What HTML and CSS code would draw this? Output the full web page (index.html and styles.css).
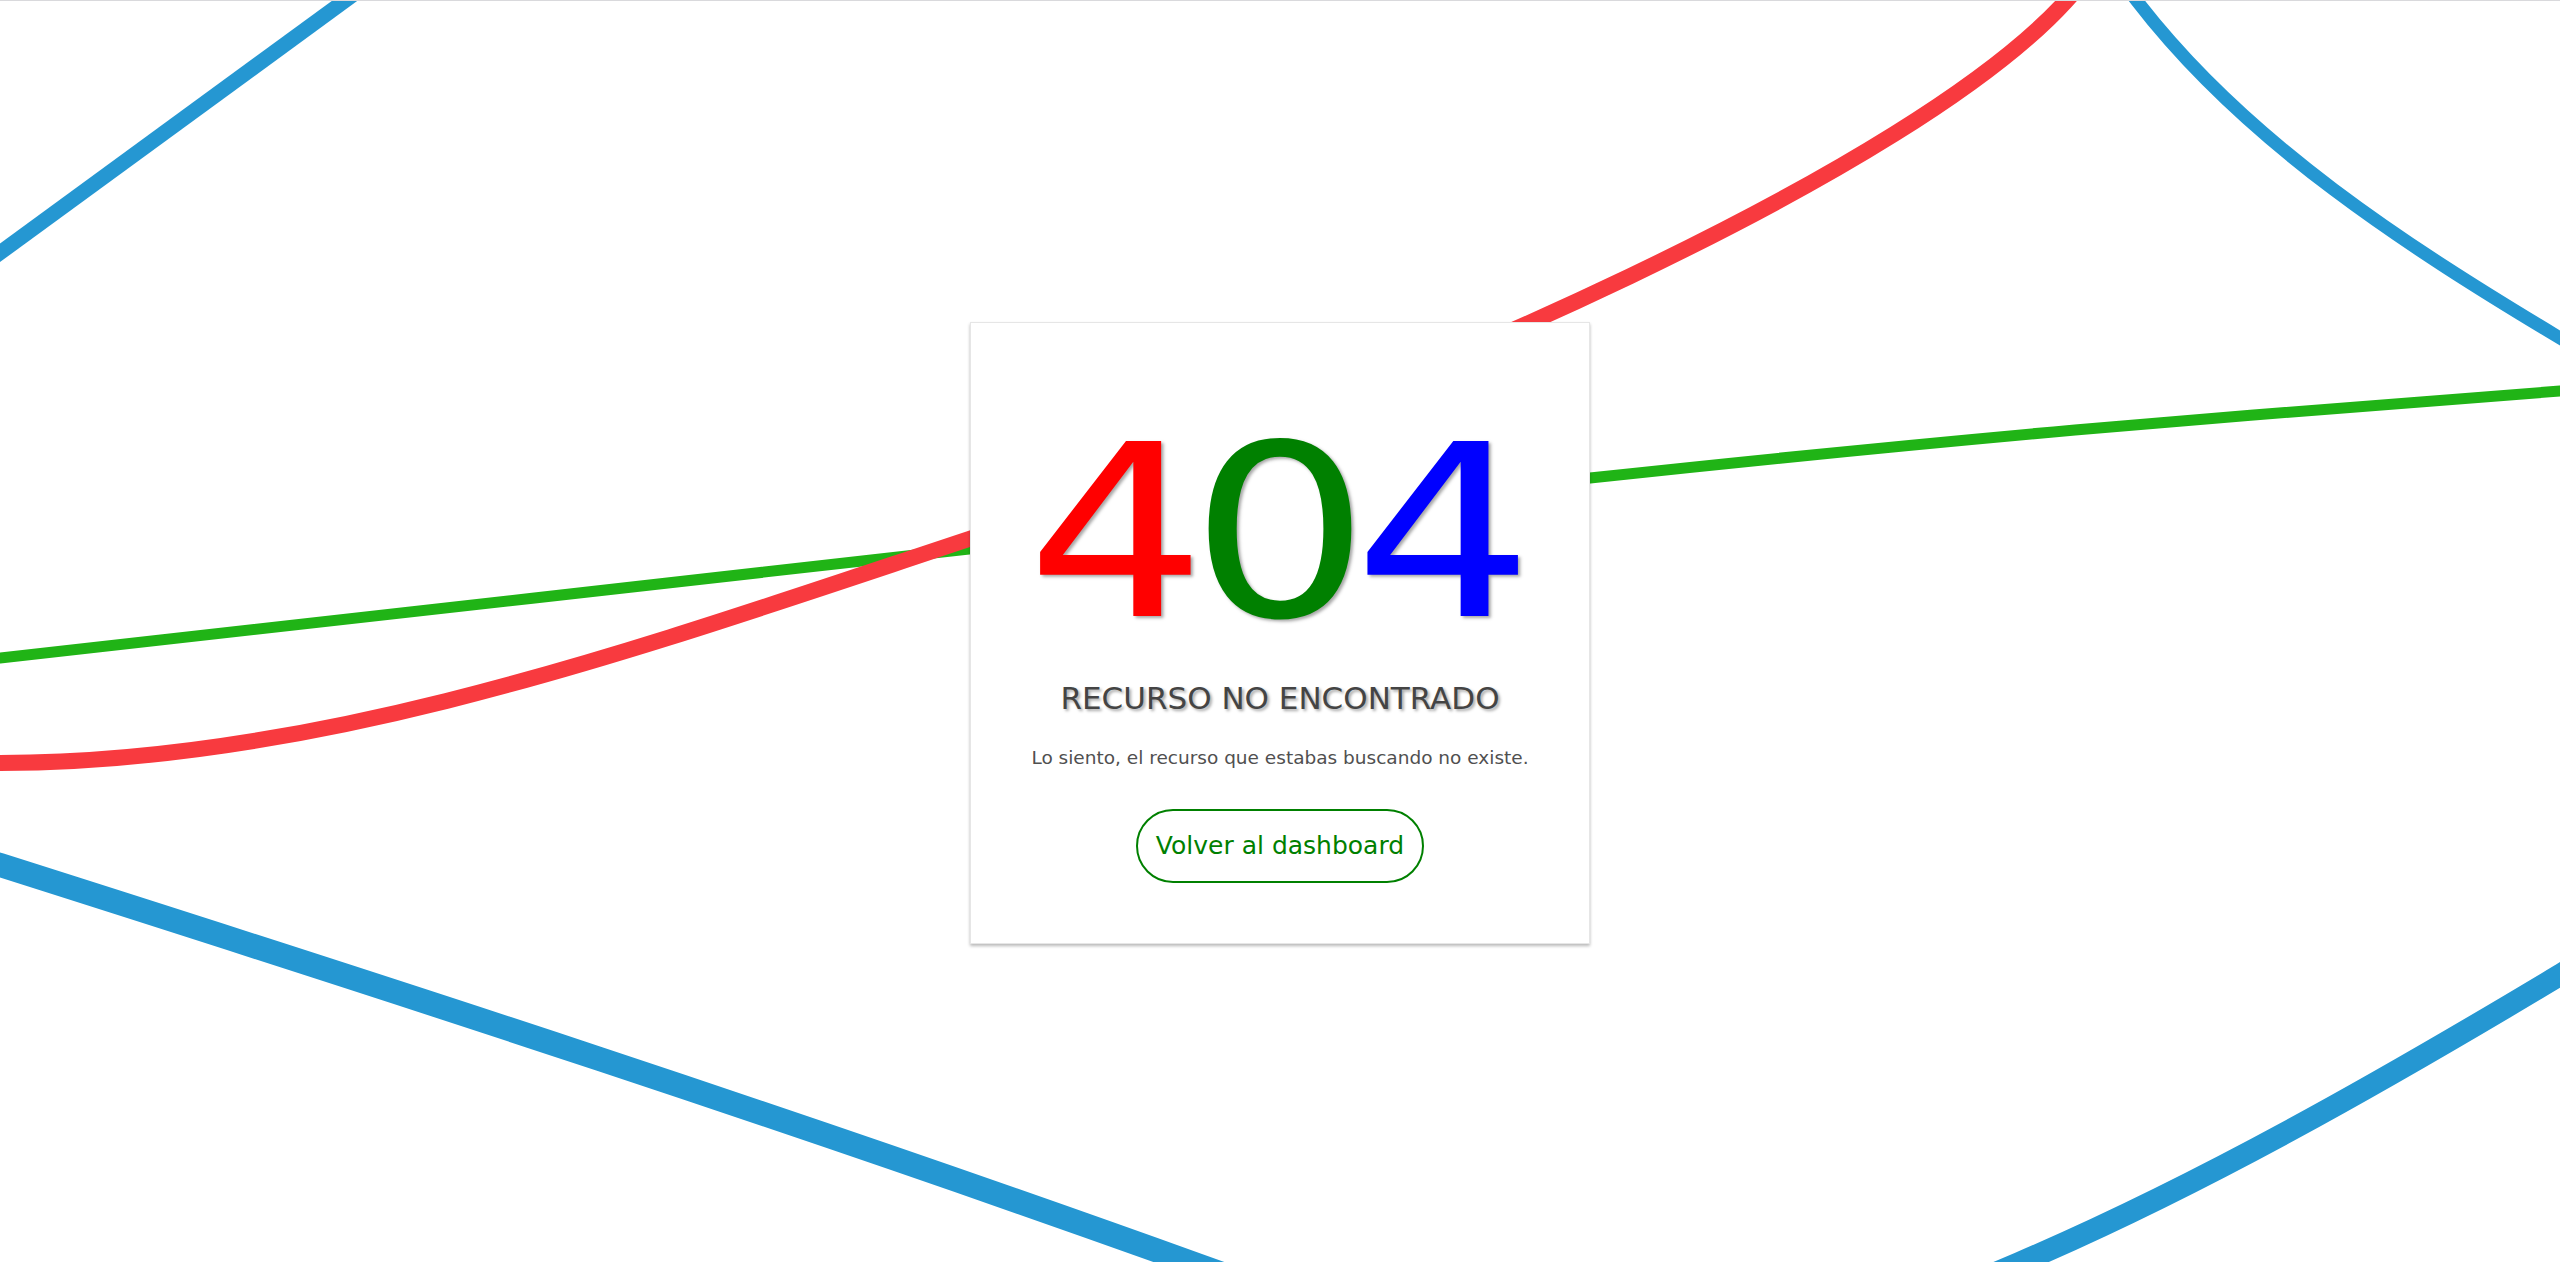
FILE: index.html
```html
<!DOCTYPE html>
<html lang="es">
<head>
<meta charset="utf-8">
<title>404 - Recurso no encontrado</title>
<link rel="stylesheet" href="styles.css">
</head>
<body>
<div class="page">
  <svg class="bg" width="2560" height="1262" viewBox="0 0 2560 1262" aria-hidden="true">
    <path class="ln blue w15" d="M -40 281 L 380 -26"/>
    <path class="ln blue w13" d="M 2110 -35 L 2137 0 C 2247 143 2410 247 2560 337 L 2660 397"/>
    <path class="ln green w11" d="M -100 668 L 0 657 C 178.2 637 704 578 969 548 C 1234 518 1405.7 496.8 1590 477 C 1774.3 457.2 1913.3 443.5 2075 429 C 2236.7 414.5 2462.5 397.7 2560 390 L 2660 383"/>
    <path class="ln red w16" d="M -100 762 L 0 762 C 323 762 646 645 969 538 C 1419 389.5 1916 165 2066 0 L 2120 -59"/>
    <path class="ln blue w24" d="M -100 832 L 0 864 C 400 991 800 1121 1200 1265 L 1300 1301"/>
    <path class="ln blue w22" d="M 1900 1313 L 2019 1262 C 2199 1185 2380 1082 2560 974 L 2660 910"/>
  </svg>
  <main class="card">
    <h1 class="code"><span class="d-red">4</span><span class="d-green">0</span><span class="d-blue">4</span></h1>
    <h2 class="title">RECURSO NO ENCONTRADO</h2>
    <p class="msg">Lo siento, el recurso que estabas buscando no existe.</p>
    <a class="btn" href="#">Volver al dashboard</a>
  </main>
</div>
</body>
</html>
```

FILE: styles.css
```css
* { box-sizing: border-box; }

html, body {
  margin: 0;
  padding: 0;
  background: #ffffff;
}

body {
  font-family: "DejaVu Sans", "Liberation Sans", sans-serif;
  overflow: hidden;
}

.page {
  position: relative;
  min-height: 100vh;
  border-top: 1px solid #d9d9dc;
  padding-top: 3px;
  display: flex;
  align-items: center;
  justify-content: center;
  overflow: hidden;
}

.bg {
  position: absolute;
  top: 0;
  left: 0;
  z-index: 0;
}

.ln { fill: none; stroke-linejoin: round; }
.blue { stroke: #2597d2; }
.red { stroke: #f83a3f; }
.green { stroke: #20b416; }
.w11 { stroke-width: 11; }
.w13 { stroke-width: 13; }
.w15 { stroke-width: 15; }
.w16 { stroke-width: 16; }
.w22 { stroke-width: 22; }
.w24 { stroke-width: 24; }

.card {
  position: relative;
  z-index: 1;
  width: 620px;
  background: #ffffff;
  border: 1px solid #e6e6e6;
  box-shadow: 0 2px 3px rgba(0, 0, 0, 0.28);
  padding: 90px 0 60px;
  display: flex;
  flex-direction: column;
  align-items: center;
  text-align: center;
}

.code {
  margin: 0;
  font-size: 240px;
  line-height: 240px;
  height: 240px;
  font-weight: 400;
  letter-spacing: -14px;
  text-indent: -14px;
  transform: scaleX(1.18);
  text-shadow: 2px 2px 3px rgba(0, 0, 0, 0.35);
}

.d-red { color: #ff0000; }
.d-green { color: #008000; }
.d-blue { color: #0000ff; }

.title {
  margin: 27px 0 0;
  font-size: 31px;
  line-height: 36px;
  font-weight: 400;
  color: #444444;
  text-shadow: 2px 2px 3px rgba(0, 0, 0, 0.35);
}

.msg {
  margin: 30px 0 0;
  font-size: 18.5px;
  line-height: 24px;
  color: #505050;
}

.btn {
  margin-top: 39px;
  display: inline-block;
  padding: 20px 18px;
  font-size: 25px;
  line-height: 30px;
  color: #008000;
  text-decoration: none;
  border: 2px solid #008000;
  border-radius: 40px;
}
```
